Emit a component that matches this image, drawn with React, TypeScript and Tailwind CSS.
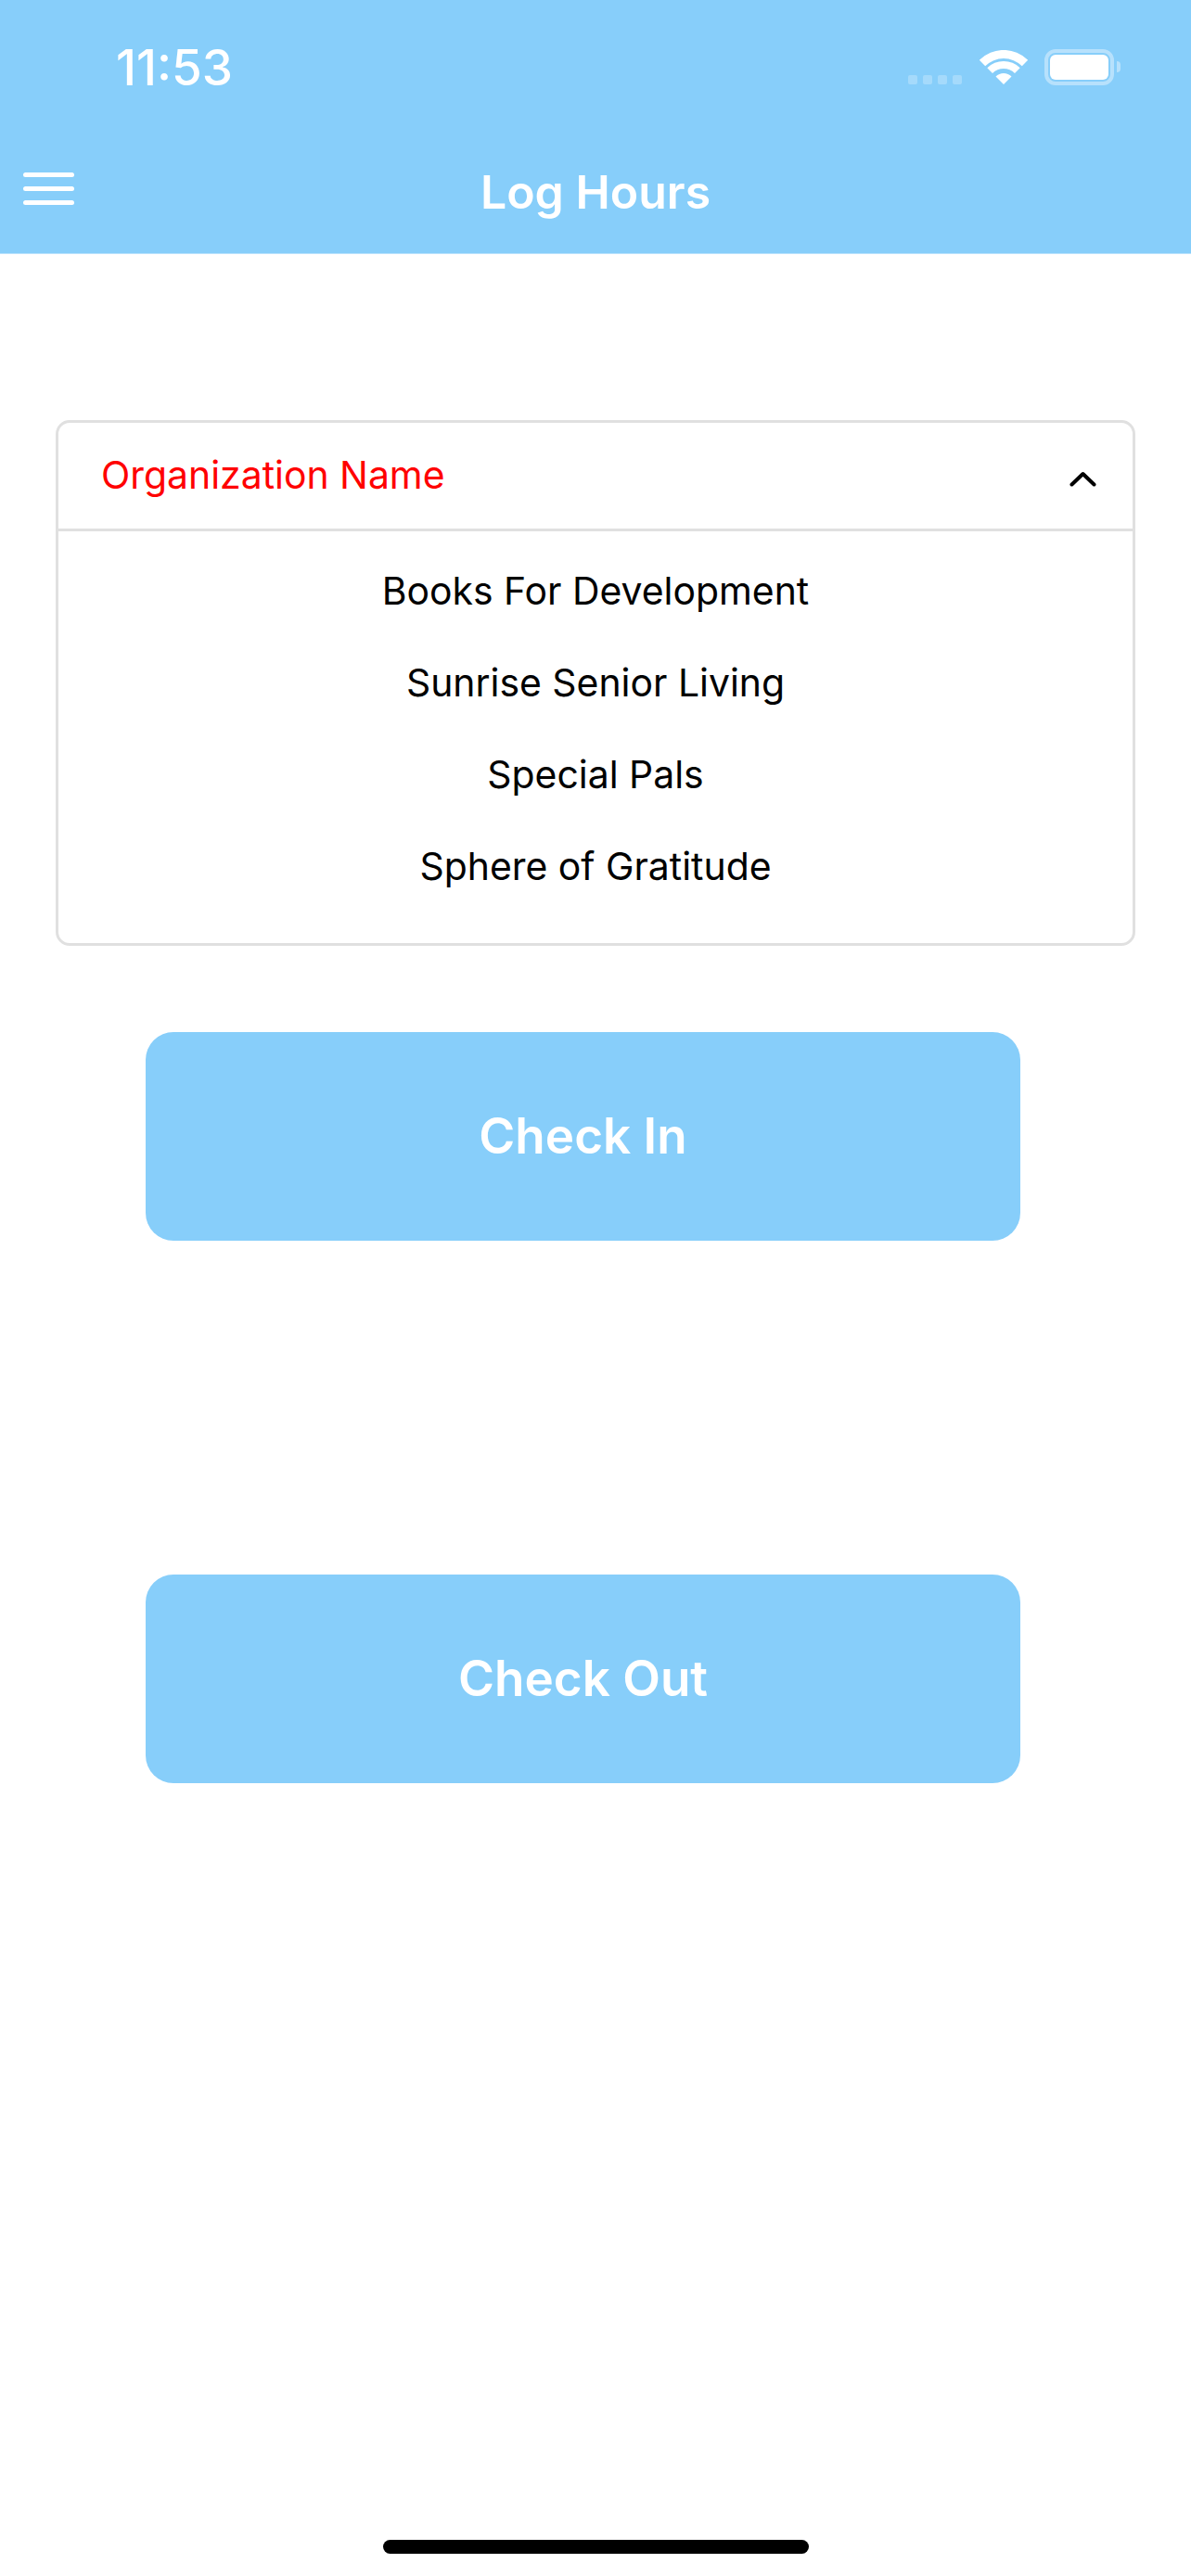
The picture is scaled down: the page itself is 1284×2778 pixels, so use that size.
const organizations = ['Books For Development', 'Sunrise Senior Living', 'Special Pals', 'Sphere of Gratitude']

const StatusBar = () => (
  <div className="flex h-[146px] items-start">
    <div className="ml-[125px] mt-[45px] text-[53px] leading-[56px] font-medium text-white">11:53</div>
    <div className="ml-auto mr-[76px] mt-[53px] flex items-start">
      <div className="mt-[28px] flex gap-[6px]">
        {[0, 1, 2, 3].map((dot) => (
          <div key={dot} className="h-[10px] w-[10px] rounded-[2px] bg-white/25" />
        ))}
      </div>
      <svg className="ml-[18px] mt-[1px]" width="54" height="37" viewBox="-2 0 54 37" fill="white">
        <path d="M-1.2 10.8A37 37 0 0 1 51.2 10.8L44.8 17.2A28 28 0 0 0 5.2 17.2Z" />
        <path d="M7.3 19.3A25 25 0 0 1 42.7 19.3L37 25A17 17 0 0 0 13 25Z" />
        <path d="M16.5 28.5A12 12 0 0 1 33.5 28.5L25 37Z" />
      </svg>
      <div className="ml-[17px] flex h-[39px] w-[75px] items-center justify-center rounded-[12px] border-[4px] border-white/40">
        <div className="h-[27px] w-[63px] rounded-[6px] bg-white" />
      </div>
      <div className="ml-[3px] mt-[13px] h-[12px] w-[4px] rounded-r-full bg-white/40" />
    </div>
  </div>
)

const MenuIcon = () => (
  <div className="ml-[25px] mt-[40px] flex w-[55px] flex-col gap-[10px]">
    <div className="h-[5px] rounded-full bg-white" />
    <div className="h-[5px] rounded-full bg-white" />
    <div className="h-[5px] rounded-full bg-white" />
  </div>
)

const App = () => {
  return (
    <div className="flex h-[2778px] w-[1284px] flex-col bg-white font-['Inter',sans-serif]">
      <div className="h-[274px] border-b border-[#b8e2fc] bg-[#87cefa]">
        <StatusBar />
        <div className="grid grid-cols-[1fr_auto_1fr] items-start">
          <MenuIcon />
          <div className="mt-[29px] text-[50px] leading-[64px] font-semibold text-white">Log Hours</div>
          <div />
        </div>
      </div>

      <div className="ml-[60px] mt-[179px] w-[1164px] rounded-[15px] border-[3px] border-[#e0e0e0]">
        <div className="flex h-[117px] items-center border-b-[3px] border-[#e0e0e0] pl-[46px] pr-[39px]">
          <span className="text-[40.9px] text-[#ff0000]">Organization Name</span>
          <svg className="ml-auto mt-[6px]" width="29" height="17" viewBox="0 0 29 17" fill="none" stroke="black" strokeWidth="4" strokeLinecap="round" strokeLinejoin="round">
            <path d="M2.5 14.5L14.5 3L26.5 14.5" />
          </svg>
        </div>
        <div className="flex flex-col items-center pb-[33px] pt-[15px]">
          {organizations.map((org) => (
            <div key={org} className="flex h-[99px] items-center text-[40.9px] text-black">{org}</div>
          ))}
        </div>
      </div>

      <button className="ml-[157px] mt-[93px] flex h-[225px] w-[943px] items-center justify-center rounded-[30px] bg-[#87cefa] text-[53px] font-semibold text-white">Check In</button>
      <button className="ml-[157px] mt-[360px] flex h-[225px] w-[943px] items-center justify-center rounded-[30px] bg-[#87cefa] text-[53px] font-semibold text-white">Check Out</button>

      <div className="mb-[24px] ml-[413px] mt-auto h-[15px] w-[459px] rounded-full bg-black" />
    </div>
  )
}

export default App
